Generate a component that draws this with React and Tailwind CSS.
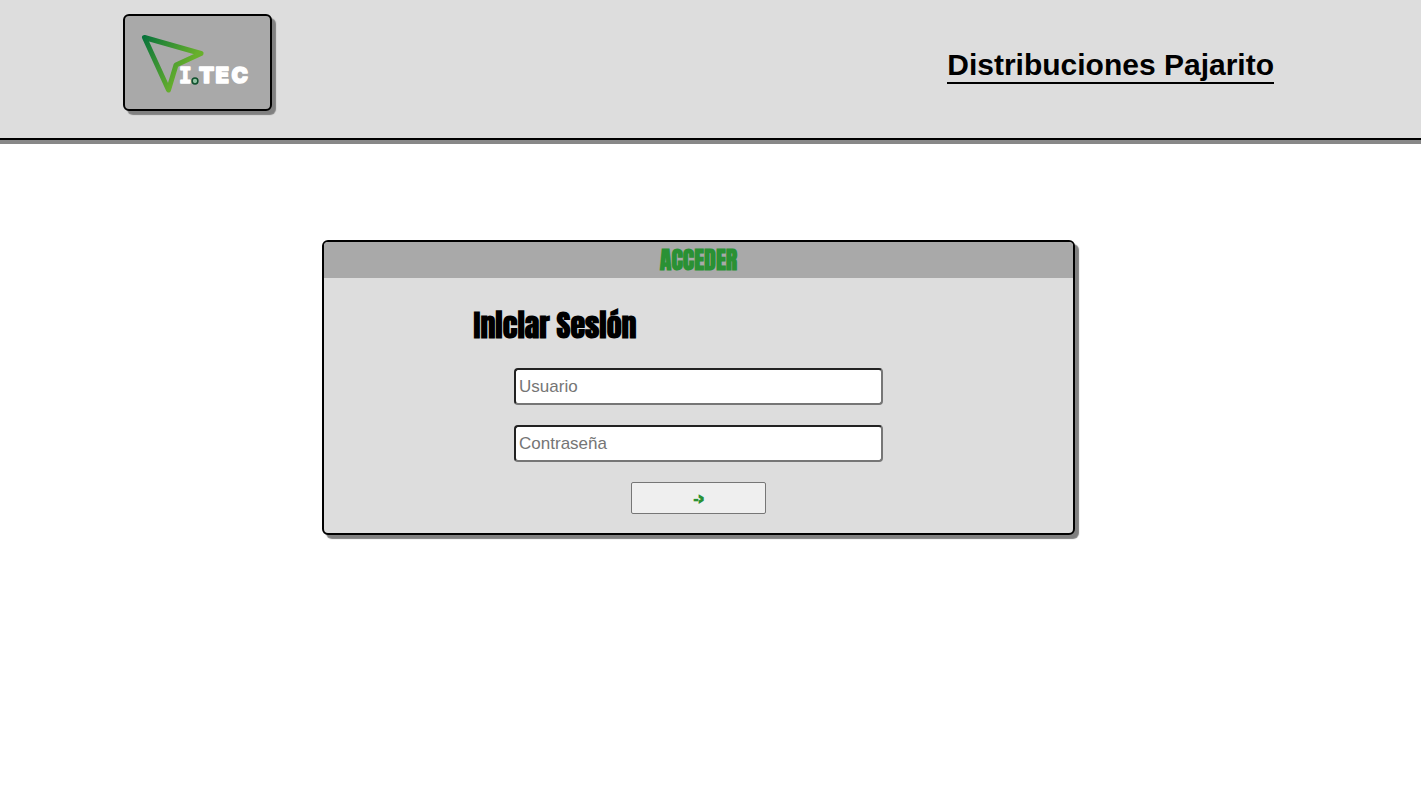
function Logo() {
  return (
    <svg viewBox="0 0 145 93" className="block h-full w-full" role="img" aria-label="I.TEC">
      <defs>
        <linearGradient id="arrow" gradientUnits="userSpaceOnUse" x1="18" y1="22" x2="62" y2="52">
          <stop offset="0" stopColor="#08733b" />
          <stop offset="1" stopColor="#68b02c" />
        </linearGradient>
      </defs>
      <path
        d="M19.500 21.500 L76 37.500 L51 49 L43.500 74 Z"
        fill="none"
        stroke="url(#arrow)"
        strokeWidth="5"
        strokeLinejoin="round"
      />
      <g fill="#fff" fontWeight="900" stroke="#fff" strokeWidth="1.4" strokeLinejoin="round">
        <text x="54" y="66.500" fontSize="21" fontFamily="'DejaVu Sans Mono', monospace">I</text>
        <text x="74" y="66.500" fontSize="22" fontFamily="Inter, sans-serif">T</text>
        <text x="90.500" y="66.500" fontSize="22" fontFamily="Inter, sans-serif">E</text>
        <text x="106.500" y="66.500" fontSize="22" fontFamily="Inter, sans-serif">C</text>
      </g>
      <circle cx="70" cy="65" r="2.900" fill="#8fc3a2" stroke="#10512d" strokeWidth="1.500" />
    </svg>
  );
}

const field =
  "h-[37px] w-[49.2%] rounded border-2 border-t-[#222] border-l-[#222] border-r-[#767676] border-b-[#767676] bg-white px-[3px] text-[17px] text-black placeholder:text-[#757575] placeholder:opacity-100";

export default function App() {
  return (
    <div className="min-h-screen bg-white font-['Liberation_Sans',Arial,sans-serif] text-black">
      <header className="flex items-start justify-between border-b-2 border-black bg-[#ddd] pt-[14px] pr-[147px] pb-[27px] pl-[123px] shadow-[0_4px_0_#888]">
        <div className="h-[97px] w-[149px] rounded-md border-2 border-black bg-[#a9a9a9] shadow-[4px_4px_1px_#808080]">
          <Logo />
        </div>
        <h1 className="mt-[34px] border-b-2 border-black text-[30px] leading-[34px] font-bold">Distribuciones Pajarito</h1>
      </header>

      <main className="pt-[100px] pr-6">
        <section className="mx-auto w-[53.95%] overflow-hidden rounded-md border-2 border-black bg-[#ddd] shadow-[4px_4px_1px_#808080]">
          <h2 className="bg-[#a9a9a9] text-center font-[Anton,Impact,sans-serif] text-2xl leading-9 font-bold text-[#2a9134]">
            ACCEDER
          </h2>
          <form className="flex flex-col items-center gap-5 pt-[26px] pb-[19px]" onSubmit={(e) => e.preventDefault()}>
            <h3 className="w-3/5 font-[Anton,Impact,sans-serif] text-[30px] leading-[44px] font-bold">
              Iniciar Sesión
            </h3>
            <input className={field} type="text" placeholder="Usuario" aria-label="Usuario" />
            <input className={field} type="password" placeholder="Contraseña" aria-label="Contraseña" />
            <button
              type="submit"
              className="h-8 w-[18%] rounded-xs border border-[#767676] bg-[#efefef] font-[Anton,Impact,sans-serif] text-base font-bold text-[#2a9134]"
            >
              {"->"}
            </button>
          </form>
        </section>
      </main>
    </div>
  );
}
